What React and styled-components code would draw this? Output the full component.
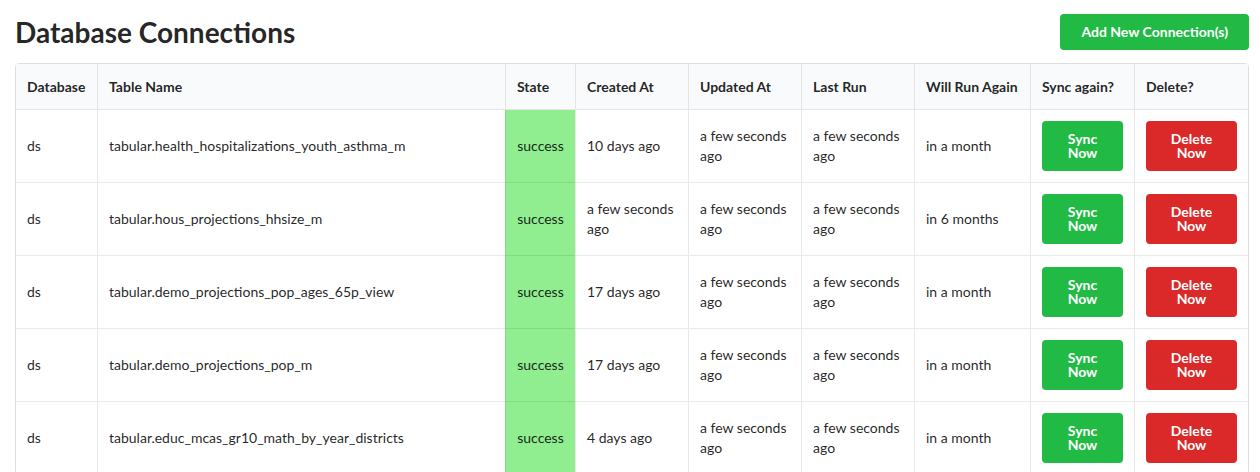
import React from "react";
import styled, { createGlobalStyle } from "styled-components";

const Global = createGlobalStyle`
  html, body { margin: 0; padding: 0; background: #fff; }
  body {
    font-family: Lato, "Helvetica Neue", Arial, sans-serif;
    font-size: 14px;
    line-height: 1.4285em;
    color: rgba(0,0,0,.87);
  }
  * { box-sizing: border-box; }
`;

const Page = styled.div`
  padding: 14px 11px 0 15px;
`;

const TopBar = styled.div`
  display: flex;
  justify-content: space-between;
  align-items: flex-start;
  margin-bottom: 13px;
`;

const Title = styled.h1`
  margin: 0;
  font-family: Lato, "Helvetica Neue", Arial, sans-serif;
  font-size: 28px;
  line-height: 36px;
  font-weight: 700;
  color: rgba(0,0,0,.87);
`;

const Button = styled.button`
  font-family: Lato, "Helvetica Neue", Arial, sans-serif;
  font-size: 14px;
  font-weight: 700;
  line-height: 1em;
  padding: 11px 21px;
  border: none;
  border-radius: 4px;
  color: #fff;
  background: ${(p) => (p.$variant === "red" ? "#db2828" : "#21ba45")};
  cursor: pointer;
  text-align: center;
`;

const Table = styled.table`
  width: 1234px;
  table-layout: fixed;
  border-collapse: separate;
  border-spacing: 0;
  border: 1px solid rgba(34,36,38,.15);
  border-radius: 4px;
`;

const Col = styled.col`
  width: ${(p) => p.$w}px;
`;

const Th = styled.th`
  background: #f9fafb;
  text-align: left;
  font-weight: 700;
  padding: 13px 11px 12px;
  line-height: 20px;
  border-bottom: 1px solid rgba(34,36,38,.1);
  border-left: ${(p) => (p.$first ? "none" : "1px solid rgba(34,36,38,.1)")};
  color: rgba(0,0,0,.87);
`;

const Td = styled.td`
  padding: 11px 11px;
  line-height: 20px;
  vertical-align: middle;
  border-top: ${(p) => (p.$firstRow ? "none" : "1px solid rgba(34,36,38,.1)")};
  border-left: ${(p) => (p.$first ? "none" : "1px solid rgba(34,36,38,.1)")};
  background: ${(p) => (p.$state ? "#90ee90" : "transparent")};
  text-align: ${(p) => (p.$state ? "center" : "left")};
  word-wrap: break-word;
`;

const cols = [81, 408, 70, 113, 113, 113, 116, 104, 114];
const heads = ["Database", "Table Name", "State", "Created At", "Updated At", "Last Run", "Will Run Again", "Sync again?", "Delete?"];

const rows = [
  ["tabular.health_hospitalizations_youth_asthma_m", "10 days ago", "in a month"],
  ["tabular.hous_projections_hhsize_m", "a few seconds ago", "in 6 months"],
  ["tabular.demo_projections_pop_ages_65p_view", "17 days ago", "in a month"],
  ["tabular.demo_projections_pop_m", "17 days ago", "in a month"],
  ["tabular.educ_mcas_gr10_math_by_year_districts", "4 days ago", "in a month"],
];

export default function App() {
  return (
    <Page>
      <Global />
      <TopBar>
        <Title>Database Connections</Title>
        <Button>Add New Connection(s)</Button>
      </TopBar>
      <Table>
        <colgroup>
          {cols.map((w, i) => (
            <Col key={i} $w={w} />
          ))}
        </colgroup>
        <thead>
          <tr>
            {heads.map((h, i) => (
              <Th key={h} $first={i === 0}>{h}</Th>
            ))}
          </tr>
        </thead>
        <tbody>
          {rows.map(([name, created, again], r) => (
            <tr key={name}>
              <Td $first $firstRow={r === 0}>ds</Td>
              <Td $firstRow={r === 0}>{name}</Td>
              <Td $firstRow={r === 0} $state>success</Td>
              <Td $firstRow={r === 0}>{created}</Td>
              <Td $firstRow={r === 0}>a few seconds ago</Td>
              <Td $firstRow={r === 0}>a few seconds ago</Td>
              <Td $firstRow={r === 0}>{again}</Td>
              <Td $firstRow={r === 0}>
                <Button>Sync Now</Button>
              </Td>
              <Td $firstRow={r === 0}>
                <Button $variant="red">Delete Now</Button>
              </Td>
            </tr>
          ))}
        </tbody>
      </Table>
    </Page>
  );
}
